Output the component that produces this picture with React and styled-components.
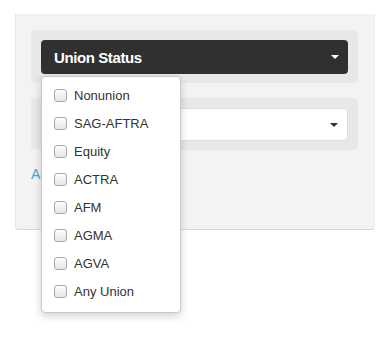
import styled, { createGlobalStyle } from "styled-components";

const GlobalStyle = createGlobalStyle`
  html, body, #root {
    margin: 0;
    min-height: 339px;
  }
  body {
    background: #fff;
    font-family: "Liberation Sans", Arial, sans-serif;
  }
`;

const Page = styled.div`
  min-height: 339px;
  padding-top: 14px;
  box-sizing: border-box;
`;

const Panel = styled.div`
  margin: 0 15px;
  width: 360px;
  height: 216px;
  box-sizing: border-box;
  padding: 16px 16px 16px 15px;
  background: #f3f3f3;
  border-left: 1px solid #e6e6e6;
  border-right: 1px solid #ececec;
  border-bottom: 1px solid #d8d8d8;
  border-radius: 0 0 3px 3px;
  display: flex;
  flex-direction: column;
  gap: 15px;
`;

const Well = styled.div`
  background: #e8e8e8;
  border-radius: 5px;
  padding: 10px 10px 9px 10px;
`;

const DropWrap = styled.div`
  position: relative;
`;

const Toggle = styled.div`
  height: 34px;
  box-sizing: border-box;
  background: #303030;
  border-radius: 4px;
  color: #fff;
  display: flex;
  align-items: center;
  justify-content: space-between;
  padding: 0 9px 0 13px;
  font-size: 15px;
  font-weight: bold;
  letter-spacing: -0.4px;
`;

const Caret = styled.span`
  width: 0;
  height: 0;
  border-left: 4px solid transparent;
  border-right: 4px solid transparent;
  border-top: 4px solid ${(p) => p.$color};
`;

const Select = styled.div`
  height: 33px;
  box-sizing: border-box;
  background: #fff;
  border: 1px solid #dcdcdc;
  border-radius: 4px;
  display: flex;
  align-items: center;
  justify-content: flex-end;
  padding: 0 9px;
`;

const Link = styled.a`
  color: #3aa5df;
  font-size: 14px;
  margin-top: 1px;
  text-decoration: none;
`;

const Menu = styled.ul`
  position: absolute;
  top: 36px;
  left: 0;
  width: 140px;
  box-sizing: border-box;
  margin: 0;
  padding: 4px 0 7px;
  list-style: none;
  background: #fff;
  border: 1px solid #c9c9c9;
  border-radius: 4px;
  box-shadow: 0 3px 9px rgba(0, 0, 0, 0.18);
  z-index: 2;
`;

const Item = styled.li`
  height: 28px;
  display: flex;
  align-items: center;
  gap: 7px;
  padding-left: 12px;
  font-size: 13px;
  color: #333;
`;

const Box = styled.input`
  appearance: none;
  margin: 0;
  width: 13px;
  height: 13px;
  border: 1px solid #a9a9a9;
  border-radius: 3px;
  background: linear-gradient(#fdfdfd, #e6e6e6);
  box-shadow: inset 0 1px 1px rgba(255, 255, 255, 0.8);
`;

const unions = [
  "Nonunion",
  "SAG-AFTRA",
  "Equity",
  "ACTRA",
  "AFM",
  "AGMA",
  "AGVA",
  "Any Union",
];

const App = () => {
  return (
    <Page>
      <GlobalStyle />
      <Panel>
        <Well>
          <DropWrap>
            <Toggle>
              Union Status
              <Caret $color="#fff" />
            </Toggle>
            <Menu>
              {unions.map((u) => (
                <Item key={u}>
                  <Box type="checkbox" />
                  {u}
                </Item>
              ))}
            </Menu>
          </DropWrap>
        </Well>
        <Well>
          <Select>
            <Caret $color="#333" />
          </Select>
        </Well>
        <Link href="#">Add another filter</Link>
      </Panel>
    </Page>
  );
};

export default App;
